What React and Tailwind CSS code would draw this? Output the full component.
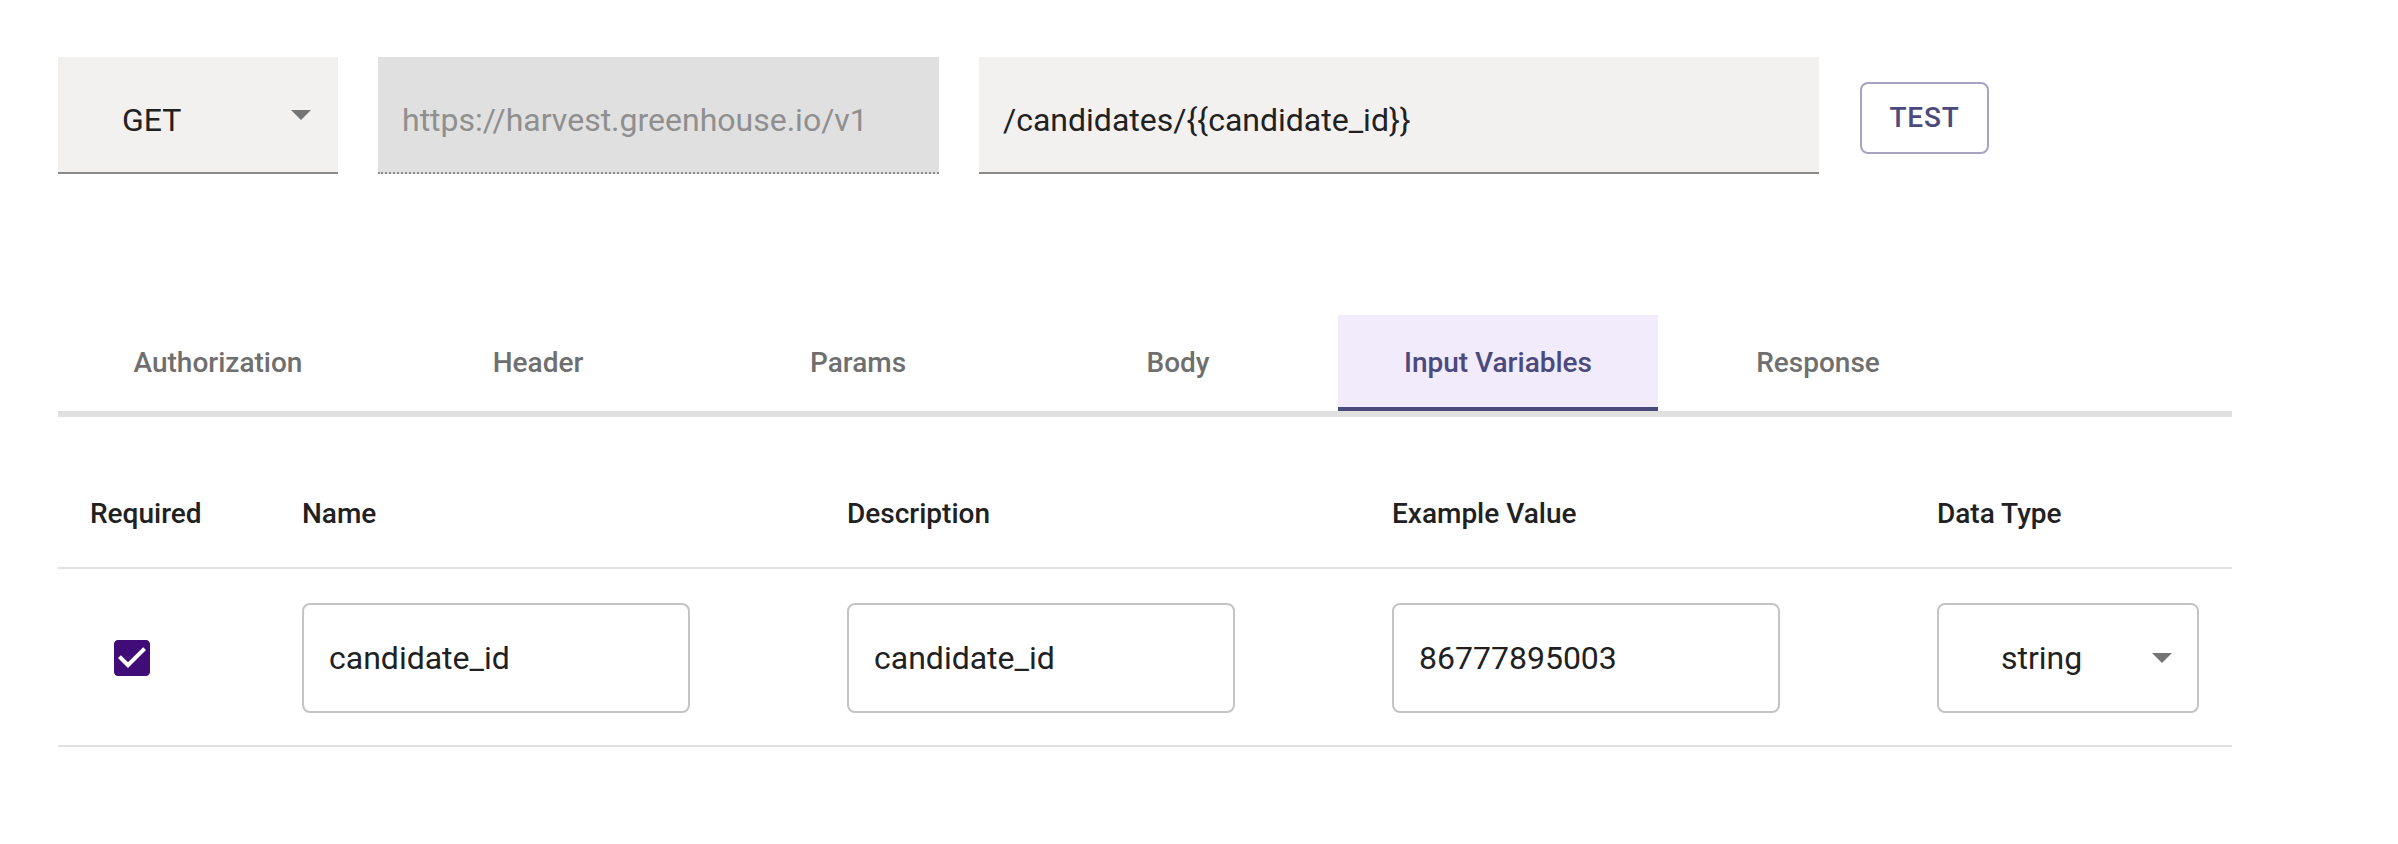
import { useState } from "react";

const tabs = ["Authorization", "Header", "Params", "Body", "Input Variables", "Response"];

const ArrowDown = () => (
  <svg className="w-[20px] h-[10px]" viewBox="7 10 10 5" fill="#757575">
    <path d="M7 10l5 5 5-5z" />
  </svg>
);

const App = () => {
  const [activeTab, setActiveTab] = useState("Input Variables");
  const [required, setRequired] = useState(true);

  return (
    <div className="min-h-[844px] w-full bg-white pl-[58px] pt-[57px] font-['Roboto',sans-serif] text-[#212121]">
      {/* Request line */}
      <div className="flex items-center">
        <div className="w-[280px] h-[117px] bg-[#f2f1f0] border-b-2 border-[#8a8a8a] flex items-center justify-between pl-[64px] pr-[27px] pt-[11px]">
          <span className="text-[32px] leading-none">GET</span>
          <span className="-mt-[11px]">
            <ArrowDown />
          </span>
        </div>
        <div className="ml-[40px] w-[561px] h-[117px] bg-[#e0e0e0] border-b-2 border-dotted border-[#8a8a8a] flex items-center pl-[24px] pt-[11px]">
          <span className="text-[32px] leading-none text-[#8f8f8f]">https://harvest.greenhouse.io/v1</span>
        </div>
        <div className="ml-[40px] w-[840px] h-[117px] bg-[#f2f1f0] border-b-2 border-[#8a8a8a] flex items-center pl-[24px] pt-[11px]">
          <span className="text-[32px] leading-none">/candidates/{"{{candidate_id}}"}</span>
        </div>
        <button className="ml-[41px] mt-[5px] w-[129px] h-[72px] rounded-[8px] border-2 border-[#a7a3c2] text-[#4b4a7c] text-[28px] font-medium tracking-[0.8px] flex items-center justify-center">
          TEST
        </button>
      </div>

      {/* Tabs */}
      <div className="mt-[141px] w-[2174px] border-b-[6px] border-[#e0e0e0] flex">
        {tabs.map((tab) => {
          const active = tab === activeTab;
          return (
            <button
              key={tab}
              onClick={() => setActiveTab(tab)}
              className={
                active
                  ? "w-[320px] h-[96px] bg-[#f1ebfb] border-b-4 border-[#4b4a7c] text-[#4b4a7c] text-[28px] font-medium pt-[4px] flex items-center justify-center"
                  : "w-[320px] h-[96px] text-[#6f6f6f] text-[28px] font-medium flex items-center justify-center"
              }
            >
              {tab}
            </button>
          );
        })}
      </div>

      {/* Input variables table */}
      <table className="mt-[44px] w-[2174px] table-fixed border-collapse">
        <thead>
          <tr className="border-b-2 border-[#e0e0e0]">
            <th className="w-[212px] px-[32px] py-[32px] text-left text-[28px] leading-[42px] font-medium">Required</th>
            <th className="w-[545px] px-[32px] py-[32px] text-left text-[28px] leading-[42px] font-medium">Name</th>
            <th className="w-[545px] px-[32px] py-[32px] text-left text-[28px] leading-[42px] font-medium">Description</th>
            <th className="w-[545px] px-[32px] py-[32px] text-left text-[28px] leading-[42px] font-medium">Example Value</th>
            <th className="w-[327px] px-[32px] py-[32px] text-left text-[28px] leading-[42px] font-medium">Data Type</th>
          </tr>
        </thead>
        <tbody>
          <tr className="border-b-2 border-[#e0e0e0]">
            <td className="px-[32px] pt-[34px] pb-[32px] align-middle">
              <button onClick={() => setRequired(!required)} className="ml-[18px] flex">
                {required ? (
                  <svg className="w-[48px] h-[48px]" viewBox="0 0 24 24" fill="#400d78">
                    <path d="M19 3H5c-1.11 0-2 .9-2 2v14c0 1.1.89 2 2 2h14c1.11 0 2-.9 2-2V5c0-1.1-.89-2-2-2zm-9 14l-5-5 1.41-1.41L10 14.17l7.59-7.59L19 8l-9 9z" />
                  </svg>
                ) : (
                  <svg className="w-[48px] h-[48px]" viewBox="0 0 24 24" fill="#757575">
                    <path d="M19 5v14H5V5h14m0-2H5c-1.1 0-2 .9-2 2v14c0 1.1.9 2 2 2h14c1.1 0 2-.9 2-2V5c0-1.1-.9-2-2-2z" />
                  </svg>
                )}
              </button>
            </td>
            <td className="px-[32px] pt-[34px] pb-[32px]">
              <div className="w-[388px] h-[110px] rounded-[8px] border-2 border-[#c4c4c4] flex items-center pl-[25px]">
                <span className="text-[32px] leading-none">candidate_id</span>
              </div>
            </td>
            <td className="px-[32px] pt-[34px] pb-[32px]">
              <div className="w-[388px] h-[110px] rounded-[8px] border-2 border-[#c4c4c4] flex items-center pl-[25px]">
                <span className="text-[32px] leading-none">candidate_id</span>
              </div>
            </td>
            <td className="px-[32px] pt-[34px] pb-[32px]">
              <div className="w-[388px] h-[110px] rounded-[8px] border-2 border-[#c4c4c4] flex items-center pl-[25px]">
                <span className="text-[32px] leading-none">86777895003</span>
              </div>
            </td>
            <td className="px-[32px] pt-[34px] pb-[32px]">
              <div className="w-[262px] h-[110px] rounded-[8px] border-2 border-[#c4c4c4] flex items-center justify-between pl-[62px] pr-[25px]">
                <span className="text-[32px] leading-none">string</span>
                <ArrowDown />
              </div>
            </td>
          </tr>
        </tbody>
      </table>
    </div>
  );
};

export default App;
